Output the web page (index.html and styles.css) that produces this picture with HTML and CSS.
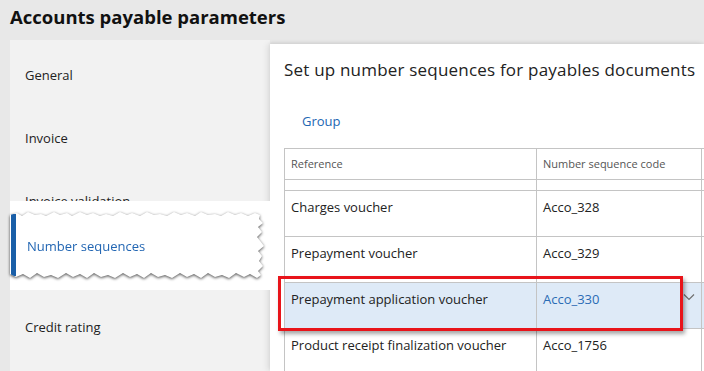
FILE: index.html
```html
<!DOCTYPE html>
<html lang="en">
<head>
    <meta charset="UTF-8">
    <meta name="viewport" content="width=device-width, initial-scale=1.0">
    <title>Accounts payable parameters</title>
    <link rel="stylesheet" href="styles.css">
</head>
<body>
    <h1 class="page-title">Accounts payable parameters</h1>
    <div class="page">
        <ul class="nav">
            <li class="nav-item">General</li>
            <li class="nav-item">Invoice</li>
            <li class="nav-item">Invoice validation</li>
            <li class="nav-item nav-selected">
                <div class="callout">
                    <div class="paper-shadow">
                        <div class="paper">
                            <span class="paper-bar"></span>
                            <span class="paper-text">Number sequences</span>
                        </div>
                    </div>
                </div>
            </li>
            <li class="nav-item">Credit rating</li>
        </ul>

        <div class="content">
            <h2 class="content-title">Set up number sequences for payables documents</h2>
            <div class="toolbar">
                <span class="toolbar-link">Group</span>
            </div>
            <div class="grid-wrap">
                <table class="grid">
                    <thead>
                        <tr class="grid-head">
                            <th class="col-ref">Reference</th>
                            <th class="col-code">Number sequence code</th>
                            <th class="col-more"></th>
                        </tr>
                    </thead>
                    <tbody>
                        <tr class="grid-cut">
                            <td></td><td></td><td></td>
                        </tr>
                        <tr>
                            <td>Charges voucher</td><td>Acco_328</td><td></td>
                        </tr>
                        <tr>
                            <td>Prepayment voucher</td><td>Acco_329</td><td></td>
                        </tr>
                        <tr class="grid-active">
                            <td>Prepayment application voucher</td>
                            <td class="code-cell">
                                <span class="code-link">Acco_330</span>
                                <svg class="chevron" width="12" height="8" viewBox="0 0 12 8">
                                    <polyline points="1,1.5 6,6.5 11,1.5" fill="none" stroke="#6f6f6f" stroke-width="1.2"/>
                                </svg>
                            </td>
                            <td></td>
                        </tr>
                        <tr>
                            <td>Product receipt finalization voucher</td><td>Acco_1756</td><td></td>
                        </tr>
                    </tbody>
                </table>
                <div class="highlight-box"></div>
            </div>
        </div>
    </div>
</body>
</html>
```

FILE: styles.css
```css
html, body {
    margin: 0;
    padding: 0;
}

body {
    font-family: "Open Sans", "Noto Sans", Arial, sans-serif;
    background-color: #e8e8e8;
    color: #222;
    width: 704px;
    height: 371px;
    overflow: hidden;
}

.page-title {
    margin: 0;
    height: 40px;
    padding-left: 10px;
    font-size: 18.5px;
    font-weight: 700;
    line-height: 34px;
    color: #111;
}

.page {
    display: flex;
    height: 331px;
}

/* left navigation */
.nav {
    list-style: none;
    margin: 0 0 0 10px;
    padding: 4px 0 0 0;
    width: 260px;
    flex: none;
    background-color: #f2f2f2;
}

.nav-item {
    height: 63px;
    line-height: 63px;
    padding-left: 15px;
    font-size: 13px;
    color: #222;
}

.nav-selected {
    position: relative;
}

.callout {
    position: absolute;
    top: -32px;
    left: 0;
    width: 260px;
    height: 89px;
    background-color: #fff;
    z-index: 2;
}

.paper-shadow {
    position: absolute;
    top: 11px;
    left: 0;
    filter: drop-shadow(0 1px 1.5px rgba(0, 0, 0, 0.7));
}

.paper {
    position: relative;
    width: 255px;
    height: 67px;
    background-color: #fff;
    clip-path: polygon(0 3px, 7px 1px, 12px 4px, 18px 0, 25px 3px, 31px 2px, 36px 4px, 44px 0, 50px 3px, 57px 1px, 62px 4px, 70px 0, 77px 3px, 83px 1px, 90px 4px, 96px 2px, 103px 4px, 110px 0, 117px 3px, 122px 1px, 130px 4px, 137px 0, 144px 3px, 150px 2px, 157px 4px, 164px 0, 171px 3px, 177px 1px, 185px 4px, 191px 0, 198px 3px, 205px 2px, 211px 4px, 218px 0, 225px 3px, 231px 1px, 238px 4px, 245px 1px, 250px 3px,
        249px 7px, 253px 11px, 248px 15px, 252px 20px, 247px 25px, 251px 30px, 254px 34px, 248px 39px, 252px 44px, 249px 49px, 253px 54px, 248px 59px, 251px 63px,
        247px 66px, 240px 62px, 234px 65px, 226px 61px, 219px 66px, 212px 63px, 205px 65px, 198px 61px, 191px 66px, 184px 62px, 177px 65px, 170px 61px, 162px 66px, 155px 63px, 148px 65px, 141px 61px, 134px 66px, 127px 62px, 120px 65px, 113px 61px, 105px 66px, 98px 63px, 91px 65px, 84px 61px, 77px 66px, 70px 62px, 63px 65px, 56px 61px, 48px 66px, 41px 63px, 34px 65px, 27px 61px, 20px 66px, 13px 62px, 6px 65px, 0 62px);
}

.paper-bar {
    position: absolute;
    left: 1px;
    top: 2px;
    width: 5px;
    height: 62px;
    background-color: #1a5fa8;
}

.paper-text {
    position: absolute;
    left: 17px;
    top: 24px;
    line-height: 20px;
    font-size: 13px;
    color: #2266b3;
}

/* right content */
.content {
    flex: 1;
    margin-top: 4px;
    background-color: #fff;
    padding: 14px 0 0 14px;
    box-shadow: -3px 0 6px rgba(0, 0, 0, 0.08), 0 -1px 3px rgba(0, 0, 0, 0.08);
    overflow: hidden;
}

.content-title {
    margin: 0;
    font-size: 17px;
    font-weight: 400;
    line-height: 24px;
    letter-spacing: 0.2px;
    color: #222;
    white-space: nowrap;
}

.toolbar {
    height: 38px;
    padding: 28px 0 0 18px;
    line-height: 20px;
}

.toolbar-link {
    font-size: 13px;
    color: #2266b3;
}

.grid-wrap {
    position: relative;
}

.grid {
    border-collapse: collapse;
    table-layout: fixed;
    width: 460px;
    font-size: 13px;
}

.grid th,
.grid td {
    border: 1px solid #c4c4c4;
    padding: 0 0 0 6px;
    text-align: left;
    vertical-align: top;
    white-space: nowrap;
    overflow: hidden;
}

.col-ref { width: 245px; }
.col-code { width: 158px; }
.col-more { width: 50px; }

.grid-head th {
    height: 30px;
    line-height: 30px;
    font-size: 11px;
    font-weight: 400;
    color: #555;
}

.grid-cut td {
    height: 10px;
}

.grid tbody tr:not(.grid-cut) td {
    height: 46px;
    line-height: 20px;
    padding-top: 6px;
    box-sizing: border-box;
}

.grid-active td {
    background-color: #deeaf7;
}

.code-cell {
    position: relative;
}

.code-link {
    color: #2b6cb5;
}

.chevron {
    position: absolute;
    right: 6px;
    top: 10px;
}

.highlight-box {
    position: absolute;
    left: -6px;
    top: 128px;
    width: 399px;
    height: 49px;
    border: 3px solid #e8141a;
    box-shadow: 2px 3px 4px rgba(0, 0, 0, 0.35);
    pointer-events: none;
}
```
